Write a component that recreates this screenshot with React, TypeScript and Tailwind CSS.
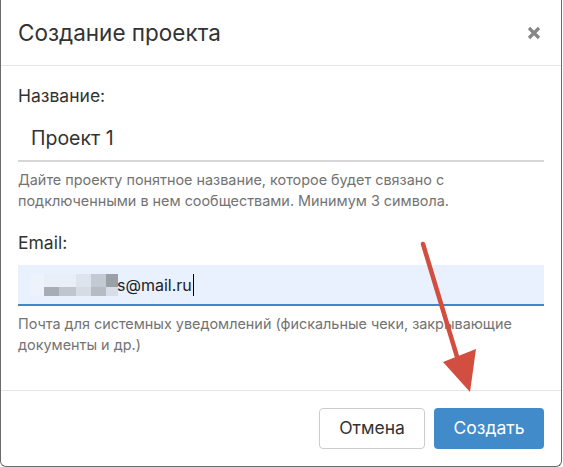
import React from "react";

const blocksTop = ["#eef2f9", "#e9eef7", "#e9eef7", "#dde4ee", "#c3cad3", "#9aa0a6"];
const blocksBottom = ["#eef2f9", "#a7adb4", "#c0c6ce", "#d6dce4", "#b6bcc4", "#d8dee7"];
const widths = [13, 15, 17, 15, 15, 12];

export default function App() {
  return (
    <div
      className="relative w-[563px] h-[467px] bg-white overflow-hidden"
      style={{ fontFamily: "Inter, 'Noto Sans', sans-serif" }}
    >
      <div className="w-[562px] h-[467px] border-x border-b border-[#6b6b6b] rounded-b-[6px] flex flex-col">
        {/* Header */}
        <div className="h-[66px] flex items-center justify-between pl-[17px] pr-[20px] border-b border-[#e6e6e6] shrink-0">
          <h1 className="text-[22.5px] text-[#333] leading-none mt-[2px]">Создание проекта</h1>
          <svg width="14" height="14" viewBox="0 0 14 14" className="mt-[1px]">
            <path d="M2 2 L12 12 M12 2 L2 12" stroke="#868686" strokeWidth="3.2" strokeLinecap="butt" />
          </svg>
        </div>

        {/* Body */}
        <div className="flex-1 px-[17px] pt-[20px]">
          <div className="text-[17.5px] text-[#333] leading-[20px]">Название:</div>
          <div className="mt-[12px] h-[44px] border-b-2 border-[#d6d6d6] flex items-center pl-[13px]">
            <span className="text-[19.5px] text-[#333]">Проект 1</span>
          </div>
          <p className="mt-[7px] text-[14.4px] leading-[21px] text-[#737373]">
            Дайте проекту понятное название, которое будет связано с
            <br />
            подключенными в нем сообществами. Минимум 3 символа.
          </p>

          <div className="mt-[22px] text-[17.5px] text-[#333] leading-[20px]">Email:</div>
          <div className="mt-[12px] h-[41px] bg-[#e8f1fd] border-b-2 border-[#3c89cc] flex items-center pl-[13px]">
            <div className="flex flex-col">
              <div className="flex">
                {blocksTop.map((c, i) => (
                  <div key={i} className="h-[13px]" style={{ width: widths[i], background: c }} />
                ))}
              </div>
              <div className="flex">
                {blocksBottom.map((c, i) => (
                  <div key={i} className="h-[9px]" style={{ width: widths[i], background: c }} />
                ))}
              </div>
            </div>
            <span className="text-[16px] text-[#222] -ml-[1px]">s@mail.ru</span>
            <span className="ml-[1px] w-[1.5px] h-[22px] bg-black" />
          </div>
          <p className="mt-[7px] text-[14.4px] leading-[21px] text-[#737373]">
            Почта для системных уведомлений (фискальные чеки, закрывающие
            <br />
            документы и др.)
          </p>
        </div>

        {/* Footer */}
        <div className="h-[76px] border-t border-[#e6e6e6] flex items-start justify-end gap-[9px] pr-[17px] pt-[17px] shrink-0">
          <button className="h-[41px] w-[106px] rounded-[4px] border border-[#cccccc] bg-white text-[17.5px] text-[#333]">
            Отмена
          </button>
          <button className="h-[41px] w-[110px] rounded-[4px] bg-[#428bca] text-[17.5px] text-white">
            Создать
          </button>
        </div>
      </div>

      {/* Annotation arrow */}
      <svg className="absolute left-0 top-0 pointer-events-none" width="563" height="467">
        <line x1="423" y1="244" x2="458" y2="360" stroke="#d24e40" strokeWidth="4.5" strokeLinecap="round" />
        <polygon points="443,362 476,349 470,392" fill="#d24e40" />
      </svg>
    </div>
  );
}
